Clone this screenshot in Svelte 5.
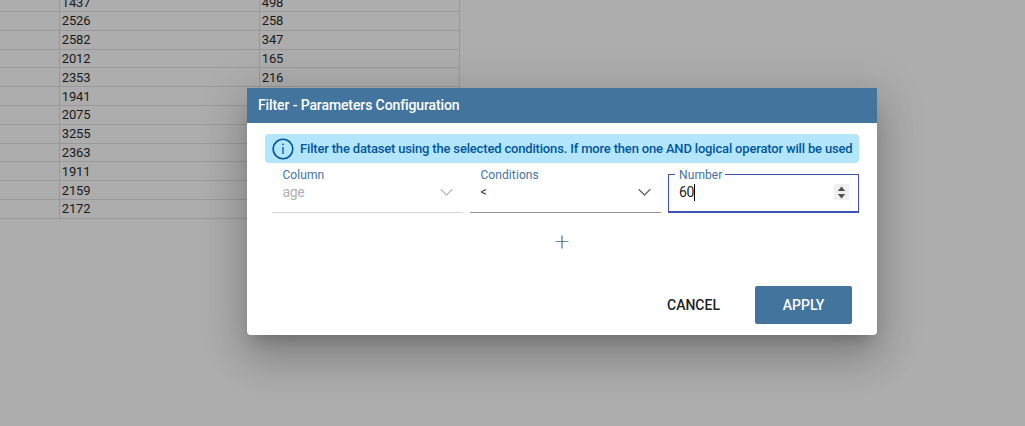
<script>
  const rows = [
    [1437, 498], [2526, 258], [2582, 347], [2012, 165], [2353, 216], [1941, ''],
    [2075, ''], [3255, ''], [2363, ''], [1911, ''], [2159, ''], [2172, '']
  ];
</script>

<div class="page">
  <div class="grid">
    {#each rows as [a, b]}
      <div class="row">
        <div class="cell first"></div>
        <div class="cell">{a}</div>
        <div class="cell">{b}</div>
      </div>
    {/each}
  </div>

  <div class="dialog">
    <header>Filter - Parameters Configuration</header>
    <div class="info">
      <svg width="22" height="22" viewBox="0 0 22 22">
        <circle cx="11" cy="11" r="9.8" fill="none" stroke="#01579b" stroke-width="1.6" />
        <path d="M11 9v7" stroke="#01579b" stroke-width="1.3" />
        <circle cx="11" cy="6.3" r="0.9" fill="#01579b" />
      </svg>
      <span>Filter the dataset using the selected conditions. If more then one AND logical operator will be used</span>
    </div>
    <div class="fields">
      <div class="field disabled">
        <label for="column">Column</label>
        <div class="value" id="column">age
          <svg width="13" height="8" viewBox="0 0 13 8"><path d="M.7 1.2 6.5 7 12.3 1.2" /></svg>
        </div>
      </div>
      <div class="field">
        <label for="cond">Conditions</label>
        <div class="value" id="cond"><span class="op">&lt;</span>
          <svg width="13" height="8" viewBox="0 0 13 8"><path d="M.7 1.2 6.5 7 12.3 1.2" /></svg>
        </div>
      </div>
      <div class="field number">
        <label for="num">Number</label>
        <div class="value" id="num"><span class="typed">60<i></i></span>
          <svg class="spin" width="15" height="16" viewBox="0 0 15 16"><rect width="15" height="16" fill="#efefef" /><path d="M3.8 7 7.5 2.6 11.2 7zM3.8 10l3.7 4.4L11.2 10z" /></svg>
        </div>
      </div>
    </div>
    <div class="add">
      <svg width="14" height="14" viewBox="0 0 14 14"><path d="M.5 6.5h13" stroke="#6f8796" /><path d="M7 .5v13" stroke="#43749e" stroke-width="1.2" /></svg>
    </div>
    <footer>
      <button class="cancel">CANCEL</button>
      <button class="apply">APPLY</button>
    </footer>
  </div>
</div>

<style>
  :global(body) { background: #adadad; overflow: hidden; }
  .page {
    position: relative;
    display: flow-root;
    height: 426px;
    overflow: hidden;
    font-family: Roboto, sans-serif;
  }
  .page, .page * { box-sizing: border-box; }
  .grid { width: 460px; margin-top: -6.8px; font-size: 13px; letter-spacing: -.1px; color: #1a1a1a; }
  .row { display: flex; height: 18.8px; }
  .cell {
    width: 200px;
    padding: .4px 0 0 1.7px;
    line-height: 18px;
    border-right: 1px solid #999;
    border-bottom: 1px solid #999;
  }
  .first { width: 60px; }
  .dialog {
    position: absolute;
    left: 247px;
    top: 88px;
    width: 630px;
    height: 247px;
    display: flex;
    flex-direction: column;
    background: #fff;
    border-radius: 0 0 4px 4px;
    box-shadow: 0 11px 15px -7px rgba(0,0,0,.2), 0 24px 38px 3px rgba(0,0,0,.14), 0 9px 46px 8px rgba(0,0,0,.12);
  }
  header {
    height: 35px;
    padding-left: 11px;
    line-height: 34px;
    background: #43749e;
    color: #fff;
    font-size: 14px;
    font-weight: 500;
    letter-spacing: -.11px;
  }
  .info {
    display: flex;
    align-items: center;
    gap: 6.5px;
    height: 29px;
    margin: 11px 18px 0;
    padding-left: 6.5px;
    border-radius: 4px;
    background: #b3e5fc;
    color: #01579b;
    font-size: 13px;
    font-weight: 500;
    letter-spacing: -.172px;
    white-space: nowrap;
  }
  .info svg { flex: none; }
  .fields { display: flex; gap: 7px; margin: 4px 18px 0 25px; }
  .field {
    width: 191px;
    height: 46px;
    padding: 0 10px 0 10.4px;
    border-bottom: 1px solid #949494;
    color: #222;
  }
  label { display: block; height: 16px; line-height: 16px; font-size: 12px; letter-spacing: .1px; color: #43749e; }
  .value { display: flex; align-items: center; justify-content: space-between; height: 18px; font-size: 14px; letter-spacing: -.3px; }
  .value path { fill: none; stroke: #666; stroke-width: 1.3; }
  .op { font-size: 12px; }
  .disabled { border-color: #d4d4d4; color: #b0b0b0; }
  .disabled .value path { stroke: #bcbcbc; }
  .number {
    height: 39px;
    margin-top: 7px;
    padding: 0 9px;
    border: 1px solid #3f51b5;
    border-bottom-width: 2px;
  }
  .number label { width: 50px; margin: -8px 0 0 -3px; padding-left: 4px; background: #fff; }
  .number .value { padding-left: 1px; letter-spacing: -.4px; }
  .number .value .spin path { fill: #505050; stroke: none; }
  .typed { display: flex; align-items: center; }
  .typed i { width: 1px; height: 17px; background: #000; }
  .add { display: flex; justify-content: center; margin-top: 22px; }
  .add path { fill: none; }
  footer { display: flex; justify-content: flex-end; margin: auto 25px 11px 0; }
  button { height: 38px; padding: 0; border: 0; font: 500 14px Roboto, sans-serif; }
  .cancel { width: 97px; margin-right: 13px; background: transparent; color: #222; }
  .apply { width: 97px; border-radius: 2px; background: #43749e; color: #fff; }
</style>
